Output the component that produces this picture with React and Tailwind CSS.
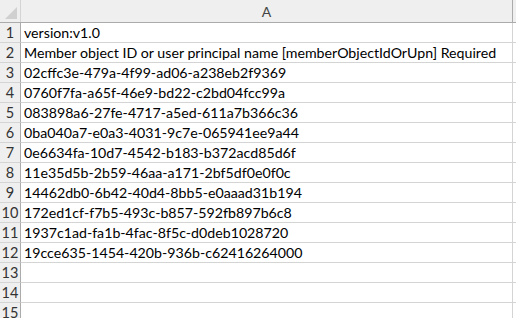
export default function App() {
  const rows = [
    "version:v1.0",
    "Member object ID or user principal name [memberObjectIdOrUpn] Required",
    "02cffc3e-479a-4f99-ad06-a238eb2f9369",
    "0760f7fa-a65f-46e9-bd22-c2bd04fcc99a",
    "083898a6-27fe-4717-a5ed-611a7b366c36",
    "0ba040a7-e0a3-4031-9c7e-065941ee9a44",
    "0e6634fa-10d7-4542-b183-b372acd85d6f",
    "11e35d5b-2b59-46aa-a171-2bf5df0e0f0c",
    "14462db0-6b42-40d4-8bb5-e0aaad31b194",
    "172ed1cf-f7b5-493c-b857-592fb897b6c8",
    "1937c1ad-fa1b-4fac-8f5c-d0deb1028720",
    "19cce635-1454-420b-936b-c62416264000",
    "",
    "",
    "",
  ];
  return (
    <div className="w-[516px] h-[318px] overflow-hidden bg-white text-[#000] [font-family:Lato,'Liberation_Sans',sans-serif] text-[14.2px]">
      <div className="flex h-[23px] bg-[#efefef] border-b border-[#ababab]">
        <div className="relative w-[21px] shrink-0 border-r border-[#d4d4d4]">
          <div className="absolute right-[3px] bottom-[3px] w-0 h-0 border-l-[12px] border-l-transparent border-b-[12px] border-b-[#d0d0d0]" />
        </div>
        <div className="w-[492px] shrink-0 border-r border-[#ababab] flex items-center justify-center text-[#444] text-[14px]">A</div>
        <div className="flex-1" />
      </div>
      {rows.map((t, i) => (
        <div key={i} className="flex h-[20px]">
          <div className="w-[21px] shrink-0 bg-[#efefef] border-r border-b border-[#ababab] border-b-[#d4d4d4] flex items-center justify-center text-[#333] text-[14.5px]">
            {i + 1}
          </div>
          <div className="w-[492px] shrink-0 border-r border-b border-[#d4d4d4] flex items-center pl-[3px] pt-[1px] whitespace-nowrap overflow-hidden leading-none">
            {t}
          </div>
          <div className="flex-1 border-b border-[#d4d4d4]" />
        </div>
      ))}
    </div>
  );
}
